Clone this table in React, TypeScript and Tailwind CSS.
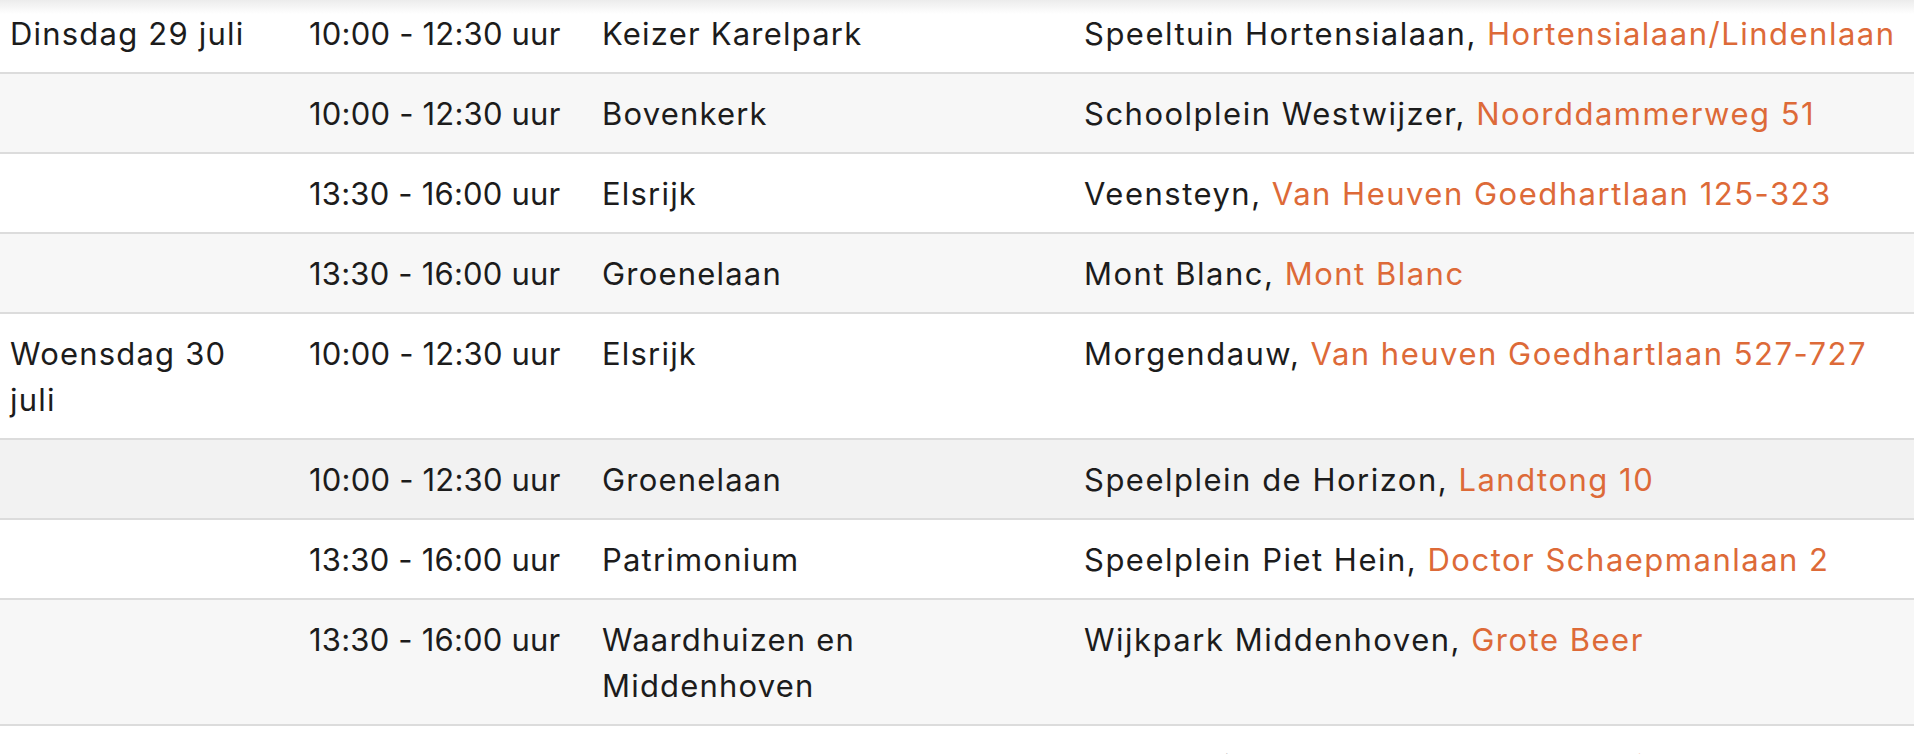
const rows = [
  { day: 'Dinsdag 29 juli', time: '10:00 - 12:30 uur', area: 'Keizer Karelpark', place: 'Speeltuin Hortensialaan', addr: 'Hortensialaan/Lindenlaan' },
  { day: '', time: '10:00 - 12:30 uur', area: 'Bovenkerk', place: 'Schoolplein Westwijzer', addr: 'Noorddammerweg 51' },
  { day: '', time: '13:30 - 16:00 uur', area: 'Elsrijk', place: 'Veensteyn', addr: 'Van Heuven Goedhartlaan 125-323' },
  { day: '', time: '13:30 - 16:00 uur', area: 'Groenelaan', place: 'Mont Blanc', addr: 'Mont Blanc' },
  { day: 'Woensdag 30 juli', time: '10:00 - 12:30 uur', area: 'Elsrijk', place: 'Morgendauw', addr: 'Van heuven Goedhartlaan 527-727' },
  { day: '', time: '10:00 - 12:30 uur', area: 'Groenelaan', place: 'Speelplein de Horizon', addr: 'Landtong 10' },
  { day: '', time: '13:30 - 16:00 uur', area: 'Patrimonium', place: 'Speelplein Piet Hein', addr: 'Doctor Schaepmanlaan 2' },
  { day: '', time: '13:30 - 16:00 uur', area: 'Waardhuizen en Middenhoven', place: 'Wijkpark Middenhoven', addr: 'Grote Beer' },
  { day: 'Donderdag 31 juli', time: '10:00 - 12:30 uur', area: 'Bankras-Kostverloren', place: 'Speelplein Kostverloren', addr: 'Zonnestein 2' },
];

// row backgrounds follow the page's zebra striping; the 6th row is a touch darker (hovered)
const rowBg = (i: number) => {
  if (i === 5) return 'bg-[#f2f2f2]';
  return i % 2 === 1 ? 'bg-[#f7f7f7]' : 'bg-white';
};

export default function App() {
  return (
    <div className="relative h-[754px] w-full overflow-hidden bg-white font-['Inter',sans-serif] text-[31px] leading-[46px] tracking-[1.2px] text-[#1c1c1c]">
      <div className="pointer-events-none absolute inset-x-0 top-0 z-10 h-[14px] bg-gradient-to-b from-[#ececec] to-transparent" />
      <table className="w-full table-fixed border-collapse">
        <colgroup>
          <col className="w-[299px]" />
          <col className="w-[292px]" />
          <col className="w-[483px]" />
          <col />
        </colgroup>
        <tbody>
          {rows.map((r, i) => (
            <tr key={i} className={`${rowBg(i)} border-b-2 border-[#dcdcdc] align-top`}>
              <td className={`${i === 0 ? 'pt-[11px]' : 'pt-[17px]'} pb-[15px] pl-[10px] pr-[40px]`}>{r.day}</td>
              <td className={`${i === 0 ? 'pt-[11px]' : 'pt-[17px]'} pb-[15px] pl-[10px] whitespace-nowrap tracking-[0.2px]`}>{r.time}</td>
              <td className={`${i === 0 ? 'pt-[11px]' : 'pt-[17px]'} pb-[15px] pl-[11px] pr-[40px]`}>{r.area}</td>
              <td className={`${i === 0 ? 'pt-[11px]' : 'pt-[17px]'} pb-[15px] pl-[10px] whitespace-nowrap tracking-[1.5px]`}>
                {r.place}, <a href="#" className="text-[#dd6a38]">{r.addr}</a>
              </td>
            </tr>
          ))}
        </tbody>
      </table>
    </div>
  );
}
